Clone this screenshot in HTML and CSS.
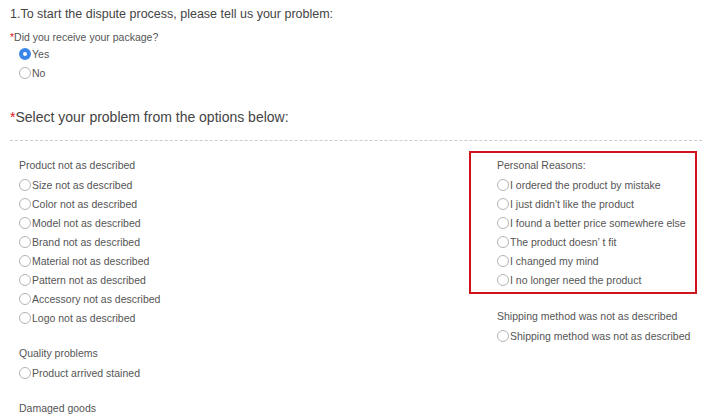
FILE: index.html
```html
<!DOCTYPE html>
<html lang="en">
<head>
    <meta charset="UTF-8">
    <title>Open a dispute</title>
    <link rel="stylesheet" href="styles.css">
</head>
<body>
    <div class="dispute">
        <h1 class="step-title">1.To start the dispute process, please tell us your problem:</h1>

        <div class="question">
            <p class="question-label"><span class="req">*</span>Did you receive your package?</p>
            <label class="option"><span class="radio checked"></span>Yes</label>
            <label class="option"><span class="radio"></span>No</label>
        </div>

        <h2 class="section-title"><span class="req">*</span>Select your problem from the options below:</h2>

        <div class="problems">
            <div class="col col-left">
                <div class="group">
                    <p class="group-title">Product not as described</p>
                    <label class="option"><span class="radio"></span>Size not as described</label>
                    <label class="option"><span class="radio"></span>Color not as described</label>
                    <label class="option"><span class="radio"></span>Model not as described</label>
                    <label class="option"><span class="radio"></span>Brand not as described</label>
                    <label class="option"><span class="radio"></span>Material not as described</label>
                    <label class="option"><span class="radio"></span>Pattern not as described</label>
                    <label class="option"><span class="radio"></span>Accessory not as described</label>
                    <label class="option"><span class="radio"></span>Logo not as described</label>
                </div>
                <div class="group">
                    <p class="group-title">Quality problems</p>
                    <label class="option"><span class="radio"></span>Product arrived stained</label>
                </div>
                <div class="group">
                    <p class="group-title">Damaged goods</p>
                </div>
            </div>

            <div class="col col-right">
                <div class="group highlight">
                    <p class="group-title">Personal Reasons:</p>
                    <label class="option"><span class="radio"></span>I ordered the product by mistake</label>
                    <label class="option"><span class="radio"></span>I just didn't like the product</label>
                    <label class="option"><span class="radio"></span>I found a better price somewhere else</label>
                    <label class="option"><span class="radio"></span>The product doesn’ t fit</label>
                    <label class="option"><span class="radio"></span>I changed my mind</label>
                    <label class="option"><span class="radio"></span>I no longer need the product</label>
                </div>
                <div class="group shipping">
                    <p class="group-title">Shipping method was not as described</p>
                    <label class="option"><span class="radio"></span>Shipping method was not as described</label>
                </div>
            </div>
        </div>
    </div>
</body>
</html>
```

FILE: styles.css
```css
body {
    margin: 0;
    font-family: "Liberation Sans", Arial, sans-serif;
    color: #555;
    background: #fff;
}
p {
    margin: 0;
}
.dispute {
    padding: 5px 4px 0 10px;
}
.step-title {
    margin: 0;
    font-size: 12.5px;
    font-weight: normal;
    line-height: 19px;
    color: #444;
}
.req {
    color: #d7161f;
}
.question {
    padding-top: 6px;
}
.question-label {
    font-size: 10.5px;
    line-height: 14px;
    color: #555;
}
.question .option {
    margin-left: 9px;
}
.option {
    display: flex;
    align-items: center;
    height: 19px;
    font-size: 10.5px;
    color: #555;
}
.radio {
    width: 12px;
    height: 12px;
    border: 1px solid #b4b4b4;
    border-radius: 50%;
    margin-right: 1px;
    box-sizing: border-box;
    flex-shrink: 0;
    background: #fff;
}
.radio.checked {
    border: 4px solid #3a86e8;
}
.section-title {
    margin: 25px 0 0;
    font-size: 14px;
    font-weight: normal;
    line-height: 20px;
    color: #444;
    padding-bottom: 13px;
    border-bottom: 1px dashed #ccc;
}
.problems {
    display: grid;
    grid-template-columns: 459px 228px;
    padding-top: 10px;
}
.col-left {
    padding: 5px 0 0 9px;
}
.group {
    margin-bottom: 17px;
}
.group-title {
    height: 19px;
    line-height: 19px;
    font-size: 10.5px;
    color: #555;
}
.highlight {
    border: 2px solid #d0121b;
    padding: 3px 0 3px 26px;
    margin-bottom: 13px;
}
.shipping {
    padding-left: 28px;
}
```
